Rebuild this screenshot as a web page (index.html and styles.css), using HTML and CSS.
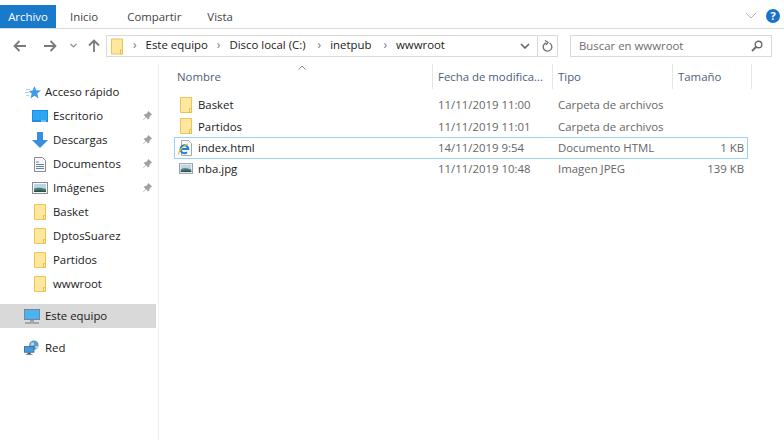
FILE: index.html
```html
<!DOCTYPE html>
<html lang="es">
<head>
<meta charset="utf-8">
<title>wwwroot</title>
<link rel="stylesheet" href="styles.css">
</head>
<body>
<svg class="defs" width="0" height="0" aria-hidden="true">
  <defs>
    <symbol id="folder" viewBox="0 0 12 16">
      <path d="M.5.5h11v15H.5z" fill="#ffe79f" stroke="#eac552"/>
      <path d="M9.500 11.500h2v4h-2z" fill="#fff0bd" stroke="#e6bd4c"/>
    </symbol>
    <symbol id="pin" viewBox="0 0 12 12">
      <path d="M7 1l4 4-1 .5-2 2.200-.2 2L6.300 10 4.500 8 1.500 11l-.5-.5L4 7.500 2.200 5.800l.3-1.300 2-.2 2-2z" fill="#a0a0a0"/>
    </symbol>
    <symbol id="picture" viewBox="0 0 16 12">
      <rect x=".5" y=".5" width="15" height="11" fill="#f4f6f8" stroke="#8a8f96"/>
      <rect x="2" y="2" width="12" height="8" fill="#b9d5e8"/>
      <path d="M2 7c3-2 7-1 12 0v3H2z" fill="#4e7a6c"/>
      <path d="M2 9c4-1 8-1 12 0v1H2z" fill="#2d4f49"/>
    </symbol>
  </defs>
</svg>
<div class="window">
  <header class="ribbon">
    <nav class="tabs">
      <span class="tab tab-active">Archivo</span>
      <span class="tab tab-inicio">Inicio</span>
      <span class="tab tab-compartir">Compartir</span>
      <span class="tab tab-vista">Vista</span>
    </nav>
    <div class="ribbon-right">
      <svg class="ribbon-chevron" width="12" height="7" viewBox="0 0 12 7"><path d="M1 1l5 5 5-5" fill="none" stroke="#b4b4b4"/></svg>
      <span class="help">?</span>
    </div>
  </header>

  <div class="toolbar">
    <div class="nav-buttons">
      <svg width="14" height="12" viewBox="0 0 14 12"><path d="M13 6H2M6.500 1L1.500 6l5 5" fill="none" stroke="#7a7a7a" stroke-width="1.800"/></svg>
      <svg class="nav-forward" width="14" height="12" viewBox="0 0 14 12"><path d="M1 6h11M7.500 1l5 5-5 5" fill="none" stroke="#7a7a7a" stroke-width="1.800"/></svg>
      <svg class="nav-down" width="7" height="5" viewBox="0 0 7 5"><path d="M.5 1l3 3 3-3" fill="none" stroke="#8f8f8f" stroke-width="1.200"/></svg>
      <svg class="nav-up" width="12" height="13" viewBox="0 0 12 13"><path d="M6 13V2M1 6.500l5-5 5 5" fill="none" stroke="#7a7a7a" stroke-width="1.800"/></svg>
    </div>
    <div class="address">
      <svg class="address-folder" width="12" height="17"><use href="#folder"/></svg>
      <span class="crumb-sep">›</span><span class="crumb crumb-first">Este equipo</span>
      <span class="crumb-sep">›</span><span class="crumb">Disco local (C:)</span>
      <span class="crumb-sep">›</span><span class="crumb">inetpub</span>
      <span class="crumb-sep">›</span><span class="crumb">wwwroot</span>
      <svg class="address-chevron" width="10" height="6" viewBox="0 0 10 6"><path d="M1 1l4 4 4-4" fill="none" stroke="#5f5f5f" stroke-width="1.500"/></svg>
      <span class="refresh">
        <svg width="11" height="13" viewBox="0 0 11 13"><path d="M4 2.800a4.300 4.300 0 1 0 3.500.2M3 .5l3 1.800-2 2.500" fill="none" stroke="#6f6f6f" stroke-width="1.300"/></svg>
      </span>
    </div>
    <div class="search">
      <span class="search-text">Buscar en wwwroot</span>
      <svg width="12" height="12" viewBox="0 0 12 12"><circle cx="7.500" cy="4.500" r="3.300" fill="none" stroke="#6a6a6a" stroke-width="1.400"/><path d="M5 7l-4 4" stroke="#6a6a6a" stroke-width="1.800"/></svg>
    </div>
  </div>

  <div class="body">
    <aside class="sidebar">
      <div class="nav-row nav-top">
        <svg class="nav-icon" width="16" height="15" viewBox="0 0 16 15"><path d="M9.500 1l1.700 4.300 4.800.3-3.700 3 1.200 4.900-4-2.700-4 2.700 1.200-4.900-3-2.400 3.900-.6z" fill="#3d9be8"/><path d="M1 4.500h4M0 7.500h3.500M1 10.500h3" stroke="#a6d2f4"/></svg>
        <span>Acceso rápido</span>
      </div>
      <div class="nav-row nav-child">
        <svg class="nav-icon" width="16" height="12" viewBox="0 0 16 12"><rect width="16" height="12" fill="#1a8ee0"/><rect x="1" y="1" width="14" height="9" fill="#2ea6f2"/><path d="M9 11h5" stroke="#d4ecfb"/></svg>
        <span>Escritorio</span>
        <svg class="pin" width="11" height="11"><use href="#pin"/></svg>
      </div>
      <div class="nav-row nav-child">
        <svg class="nav-icon" width="16" height="16" viewBox="0 0 16 16"><path d="M5 0h6v8h5l-8 8-8-8h5z" fill="#3a8ee0"/></svg>
        <span>Descargas</span>
        <svg class="pin" width="11" height="11"><use href="#pin"/></svg>
      </div>
      <div class="nav-row nav-child">
        <svg class="nav-icon doc" width="12" height="15" viewBox="0 0 12 15"><path d="M.5.500h8l3 3v11H.5z" fill="#f8f8f8" stroke="#8c8c8c"/><path d="M2 5h3M2 7.500h8M2 9.500h8M2 11.500h8" stroke="#5d86a8"/></svg>
        <span>Documentos</span>
        <svg class="pin" width="11" height="11"><use href="#pin"/></svg>
      </div>
      <div class="nav-row nav-child">
        <svg class="nav-icon" width="16" height="12"><use href="#picture"/></svg>
        <span>Imágenes</span>
        <svg class="pin" width="11" height="11"><use href="#pin"/></svg>
      </div>
      <div class="nav-row nav-child">
        <svg class="nav-icon folder-icon" width="12" height="16"><use href="#folder"/></svg>
        <span>Basket</span>
      </div>
      <div class="nav-row nav-child">
        <svg class="nav-icon folder-icon" width="12" height="16"><use href="#folder"/></svg>
        <span>DptosSuarez</span>
      </div>
      <div class="nav-row nav-child">
        <svg class="nav-icon folder-icon" width="12" height="16"><use href="#folder"/></svg>
        <span>Partidos</span>
      </div>
      <div class="nav-row nav-child">
        <svg class="nav-icon folder-icon" width="12" height="16"><use href="#folder"/></svg>
        <span>wwwroot</span>
      </div>
      <div class="nav-row nav-pc">
        <svg class="nav-icon" width="16" height="15" viewBox="0 0 16 15"><rect x=".5" y=".5" width="15" height="10" fill="#4db2ee" stroke="#6b8aa0"/><path d="M6 11h4v2H6z" fill="#9aa7b0"/><path d="M1 14h14" stroke="#8d9aa5" stroke-width="1.500"/></svg>
        <span>Este equipo</span>
      </div>
      <div class="nav-row nav-net">
        <svg class="nav-icon" width="17" height="16" viewBox="0 0 17 16"><circle cx="10.500" cy="5" r="5" fill="#5c9bc9"/><path d="M8 2c2 0 3 1 3 2s-2 2-4 1zM12 6l3 0-1 3-2-1z" fill="#b8d7ea"/><rect x=".5" y="6.500" width="10" height="6" fill="#3f9ee0" stroke="#48708f"/><path d="M4 13h3v1.500H4zM2 15h7" stroke="#7c8d99"/></svg>
        <span>Red</span>
      </div>
    </aside>

    <main class="content">
      <div class="sort-arrow">
        <svg width="8" height="5" viewBox="0 0 8 5"><path d="M.5 4.500L4 1l3.500 3.500" fill="none" stroke="#8a8a8a"/></svg>
      </div>
      <div class="grid header">
        <span class="col-name">Nombre</span>
        <span class="col">Fecha de modifica...</span>
        <span class="col">Tipo</span>
        <span class="col">Tamaño</span>
      </div>
      <div class="rows">
        <div class="grid row">
          <span class="col-name name"><svg width="12" height="16"><use href="#folder"/></svg><span class="file-label">Basket</span></span>
          <span class="cell">11/11/2019 11:00</span>
          <span class="cell">Carpeta de archivos</span>
          <span class="cell size"></span>
        </div>
        <div class="grid row">
          <span class="col-name name"><svg width="12" height="16"><use href="#folder"/></svg><span class="file-label">Partidos</span></span>
          <span class="cell">11/11/2019 11:01</span>
          <span class="cell">Carpeta de archivos</span>
          <span class="cell size"></span>
        </div>
        <div class="grid row row-selected">
          <span class="col-name name">
            <svg class="ie-icon" width="15" height="16" viewBox="0 0 15 16">
              <path d="M3.500.5h7l3 3v12h-10z" fill="#fafafa" stroke="#a8a8a8"/>
              <path d="M2.700 9h7.600a3.900 3.900 0 1 0-1.300 3.200" fill="none" stroke="#1d7fd6" stroke-width="2"/>
              <path d="M.8 14.500c-1-2 3-8 9.200-10.500" fill="none" stroke="#f1c232" stroke-width="1.300"/>
            </svg>
            <span class="file-label">index.html</span>
          </span>
          <span class="cell">14/11/2019 9:54</span>
          <span class="cell">Documento HTML</span>
          <span class="cell size">1 KB</span>
        </div>
        <div class="grid row">
          <span class="col-name name"><svg class="pic-icon" width="14" height="11"><use href="#picture"/></svg><span class="file-label">nba.jpg</span></span>
          <span class="cell">11/11/2019 10:48</span>
          <span class="cell">Imagen JPEG</span>
          <span class="cell size">139 KB</span>
        </div>
      </div>
    </main>
  </div>
</div>
</body>
</html>
```

FILE: styles.css
```css
* { box-sizing: border-box; }
html, body { margin: 0; padding: 0; }
body {
  width: 784px;
  height: 440px;
  overflow: hidden;
  background: #fff;
  font-family: "Open Sans", "Noto Sans", sans-serif;
  font-size: 11.4px;
  color: #1a1a1a;
}
.defs { position: absolute; }
.window { display: flex; flex-direction: column; height: 440px; }

.ribbon {
  height: 29px;
  padding-top: 5px;
  border-bottom: 1px solid #dadada;
  display: flex;
  justify-content: space-between;
}
.tabs { display: flex; }
.tab { height: 23px; line-height: 23px; color: #444; }
.tab-active { width: 56px; background: #1979ca; color: #fff; text-align: center; }
.tab-inicio { margin-left: 14px; }
.tab-compartir { margin-left: 29px; }
.tab-vista { margin-left: 26px; }
.ribbon-right { display: flex; align-items: center; padding-right: 4px; padding-bottom: 2px; }
.ribbon-chevron { margin-right: 9px; }
.help {
  width: 14px;
  height: 14px;
  border-radius: 50%;
  background: #1a73c8;
  color: #fff;
  font-weight: 700;
  font-size: 11px;
  line-height: 14px;
  text-align: center;
}

.toolbar { display: flex; height: 35px; padding-top: 6px; }
.nav-buttons { display: flex; align-items: center; height: 21px; width: 106px; padding-left: 13px; }
.nav-forward { margin-left: 16px; }
.nav-down { margin-left: 13px; }
.nav-up { margin-left: 11px; }
.address {
  width: 452px;
  height: 22px;
  border: 1px solid #d9d9d9;
  display: flex;
  align-items: center;
  padding-left: 4px;
  color: #1a1a1a;
}
.address-folder { margin-right: 10px; }
.crumb-sep { color: #777; margin-right: 9px; font-size: 12px; padding-bottom: 3px; }
.crumb { margin-right: 12px; padding-bottom: 3px; }
.crumb-first { margin-right: 9px; }
.address-chevron { margin-left: auto; margin-right: 7px; }
.refresh {
  width: 20px;
  height: 20px;
  border-left: 1px solid #d9d9d9;
  display: flex;
  align-items: center;
  justify-content: center;
}
.search {
  width: 202px;
  height: 22px;
  margin-left: 12px;
  border: 1px solid #d9d9d9;
  display: flex;
  align-items: center;
  justify-content: space-between;
  padding: 0 8px;
  color: #6d6d6d;
}
.search-text { padding-bottom: 2px; }

.body { display: flex; flex: 1; }
.sidebar {
  width: 159px;
  border-right: 1px solid #f0f0f0;
  padding-top: 16px;
  padding-right: 2px;
}
.nav-row { height: 24px; display: flex; align-items: center; position: relative; }
.nav-row span { padding-bottom: 2px; }
.nav-top { padding-left: 25px; }
.nav-top span { margin-left: 4px; }
.nav-top .nav-icon, .nav-pc .nav-icon, .nav-net .nav-icon { width: 16px; }
.nav-child { padding-left: 32px; }
.nav-child span { position: absolute; left: 53px; }
.doc { margin-left: 2px; }
.folder-icon { margin-left: 2px; }
.pin { position: absolute; left: 142px; top: 6px; }
.nav-pc { margin-top: 8px; background: #d9d9d9; padding-left: 24px; }
.nav-pc span { margin-left: 5px; }
.nav-net { margin-top: 8px; padding-left: 24px; }
.nav-net span { margin-left: 5px; }

.content { flex: 1; position: relative; }
.sort-arrow { position: absolute; left: 139px; top: 1px; line-height: 0; }
.grid {
  display: grid;
  grid-template-columns: 258px 120px 120px 80px;
}
.header {
  height: 25px;
  align-items: center;
  color: #4c607a;
  margin-left: 15px;
}
.col-name { padding-left: 3px; }
.col { padding-left: 5px; border-left: 1px solid #e5e5e5; height: 25px; line-height: 25px; }
.header .col:last-child { border-right: 1px solid #e5e5e5; }
.rows { padding-top: 5.3px; }
.row {
  height: 21.33px;
  margin-left: 15px;
  width: 574px;
  align-items: center;
  border: 1px solid transparent;
  color: #666;
}
.row-selected { border-color: #99d1ff; height: 22px; margin-bottom: -0.67px; }
.name { display: flex; align-items: center; color: #1a1a1a; padding-left: 5px; }
.file-label { position: absolute; left: 39px; }
.ie-icon { margin-left: -2px; }
.pic-icon { margin-left: -1px; }
.cell { padding-left: 5px; }
.size { text-align: right; padding-right: 5px; width: 76px; }
```
